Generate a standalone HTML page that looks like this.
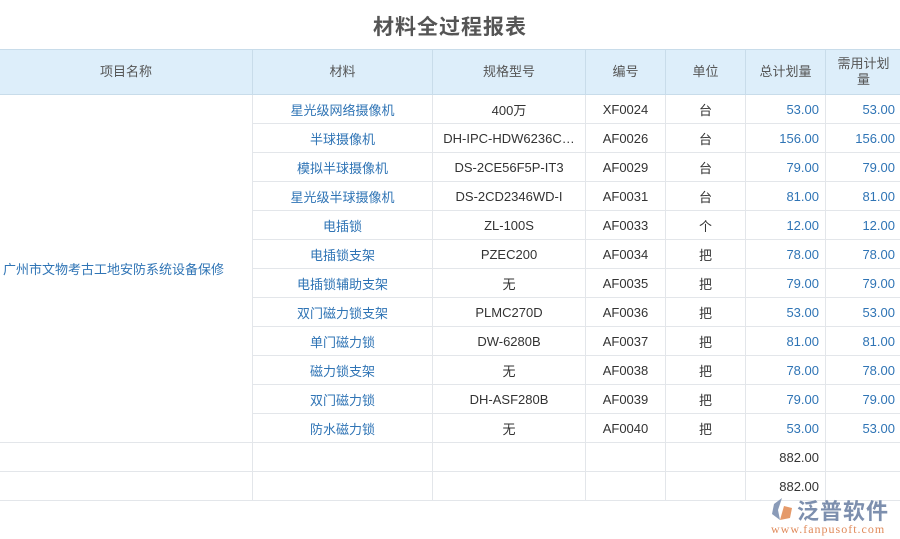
<!DOCTYPE html>
<html><head><meta charset="utf-8"><style>
body{margin:0;width:900px;height:539px;background:#fff;position:relative;overflow:hidden;font-family:"Liberation Sans","Noto Sans CJK SC",sans-serif;font-size:13px;color:#333}
h1{position:absolute;top:11px;left:0;width:900px;text-align:center;margin:0;font-size:21px;font-weight:bold;color:#555;letter-spacing:1px}
table{position:absolute;top:49px;left:-1px;border-collapse:collapse;table-layout:fixed;width:902px}
td,th{border:1px solid #e3e6ea;height:28px;padding:0 6px;text-align:center;white-space:nowrap;overflow:hidden}
th{background:#ddeefa;font-weight:normal;color:#555;height:44px;border-color:#c8dcea;line-height:16px;white-space:normal}
thead tr{border-top:1px solid #9fc3db}
.b{color:#2f74b5}.r{text-align:right;color:#2f74b5}.k{text-align:right;color:#333}
</style></head><body>
<h1>材料全过程报表</h1>
<table>
<colgroup><col style="width:253px"><col style="width:180px"><col style="width:153px"><col style="width:80px"><col style="width:80px"><col style="width:80px"><col style="width:76px"></colgroup>
<thead><tr><th>项目名称</th><th>材料</th><th>规格型号</th><th>编号</th><th>单位</th><th>总计划量</th><th>需用计划量</th></tr></thead>
<tbody>
<tr><td rowspan="12" class="b" style="padding:0 0 0 3px;text-align:left">广州市文物考古工地安防系统设备保修</td><td class="b">星光级网络摄像机</td><td>400万</td><td>XF0024</td><td>台</td><td class="r">53.00</td><td class="r">53.00</td></tr>
<tr><td class="b">半球摄像机</td><td>DH-IPC-HDW6236C…</td><td>AF0026</td><td>台</td><td class="r">156.00</td><td class="r">156.00</td></tr>
<tr><td class="b">模拟半球摄像机</td><td>DS-2CE56F5P-IT3</td><td>AF0029</td><td>台</td><td class="r">79.00</td><td class="r">79.00</td></tr>
<tr><td class="b">星光级半球摄像机</td><td>DS-2CD2346WD-I</td><td>AF0031</td><td>台</td><td class="r">81.00</td><td class="r">81.00</td></tr>
<tr><td class="b">电插锁</td><td>ZL-100S</td><td>AF0033</td><td>个</td><td class="r">12.00</td><td class="r">12.00</td></tr>
<tr><td class="b">电插锁支架</td><td>PZEC200</td><td>AF0034</td><td>把</td><td class="r">78.00</td><td class="r">78.00</td></tr>
<tr><td class="b">电插锁辅助支架</td><td>无</td><td>AF0035</td><td>把</td><td class="r">79.00</td><td class="r">79.00</td></tr>
<tr><td class="b">双门磁力锁支架</td><td>PLMC270D</td><td>AF0036</td><td>把</td><td class="r">53.00</td><td class="r">53.00</td></tr>
<tr><td class="b">单门磁力锁</td><td>DW-6280B</td><td>AF0037</td><td>把</td><td class="r">81.00</td><td class="r">81.00</td></tr>
<tr><td class="b">磁力锁支架</td><td>无</td><td>AF0038</td><td>把</td><td class="r">78.00</td><td class="r">78.00</td></tr>
<tr><td class="b">双门磁力锁</td><td>DH-ASF280B</td><td>AF0039</td><td>把</td><td class="r">79.00</td><td class="r">79.00</td></tr>
<tr><td class="b">防水磁力锁</td><td>无</td><td>AF0040</td><td>把</td><td class="r">53.00</td><td class="r">53.00</td></tr>
<tr><td></td><td></td><td></td><td></td><td></td><td class="k">882.00</td><td></td></tr>
<tr><td></td><td></td><td></td><td></td><td></td><td class="k">882.00</td><td></td></tr>
</tbody></table>
<div style="position:absolute;left:770px;top:496px;width:24px;height:26px">
<svg width="24" height="26" viewBox="0 0 24 26"><path d="M12 2 L4 8 L2 18 L10 24 L8 14 Z" fill="#8a9bb8"/><path d="M10 24 L20 22 L22 12 L14 10 Z" fill="#e59a6a"/></svg></div>
<div style="position:absolute;left:797px;top:494px;font-size:22px;color:#7d8fae;letter-spacing:1px;font-weight:bold">泛普软件</div>
<div style="position:absolute;left:771px;top:522px;font-size:12px;color:#e08a5a;font-family:'Liberation Serif',serif;letter-spacing:1px">www.fanpusoft.com</div>
</body></html>
